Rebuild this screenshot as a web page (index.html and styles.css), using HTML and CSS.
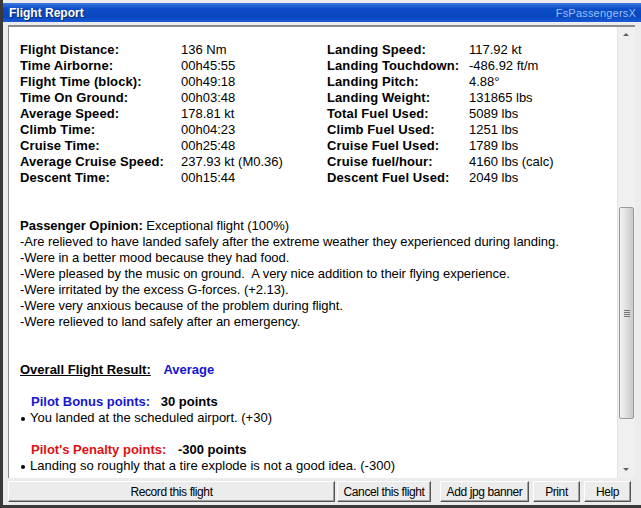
FILE: index.html
```html
<!DOCTYPE html>
<html lang="en">
<head>
    <meta charset="UTF-8">
    <title>Flight Report</title>
    <link rel="stylesheet" href="styles.css">
</head>
<body>
    <div class="window">
        <div class="titlebar">
            <span class="title">Flight Report</span>
            <span class="brand">FsPassengersX</span>
        </div>

        <div class="main">
            <div class="report">
                <div class="stats">
                    <div class="statgrid left">
                        <span class="lbl">Flight Distance:</span><span>136 Nm</span>
                        <span class="lbl">Time Airborne:</span><span>00h45:55</span>
                        <span class="lbl">Flight Time (block):</span><span>00h49:18</span>
                        <span class="lbl">Time On Ground:</span><span>00h03:48</span>
                        <span class="lbl">Average Speed:</span><span>178.81 kt</span>
                        <span class="lbl">Climb Time:</span><span>00h04:23</span>
                        <span class="lbl">Cruise Time:</span><span>00h25:48</span>
                        <span class="lbl">Average Cruise Speed:</span><span>237.93 kt (M0.36)</span>
                        <span class="lbl">Descent Time:</span><span>00h15:44</span>
                    </div>
                    <div class="statgrid right">
                        <span class="lbl">Landing Speed:</span><span>117.92 kt</span>
                        <span class="lbl">Landing Touchdown:</span><span>-486.92 ft/m</span>
                        <span class="lbl">Landing Pitch:</span><span>4.88°</span>
                        <span class="lbl">Landing Weight:</span><span>131865 lbs</span>
                        <span class="lbl">Total Fuel Used:</span><span>5089 lbs</span>
                        <span class="lbl">Climb Fuel Used:</span><span>1251 lbs</span>
                        <span class="lbl">Cruise Fuel Used:</span><span>1789 lbs</span>
                        <span class="lbl">Cruise fuel/hour:</span><span>4160 lbs (calc)</span>
                        <span class="lbl">Descent Fuel Used:</span><span>2049 lbs</span>
                    </div>
                </div>

                <div class="opinion">
                    <p><b>Passenger Opinion:</b> Exceptional flight (100%)</p>
                    <p>-Are relieved to have landed safely after the extreme weather they experienced during landing.</p>
                    <p>-Were in a better mood because they had food.</p>
                    <p>-Were pleased by the music on ground.&nbsp; A very nice addition to their flying experience.</p>
                    <p>-Were irritated by the excess G-forces. (+2.13).</p>
                    <p>-Were very anxious because of the problem during flight.</p>
                    <p>-Were relieved to land safely after an emergency.</p>
                </div>

                <div class="result">
                    <span class="result-lbl">Overall Flight Result:</span>
                    <span class="result-val">Average</span>
                </div>

                <div class="points">
                    <p class="points-head"><span class="bonus">Pilot Bonus points:</span> <span class="pts">30 points</span></p>
                    <p class="bullet">You landed at the scheduled airport. (+30)</p>
                </div>

                <div class="points">
                    <p class="points-head"><span class="penalty">Pilot's Penalty points:</span> <span class="pts">-300 points</span></p>
                    <p class="bullet">Landing so roughly that a tire explode is not a good idea. (-300)</p>
                </div>
            </div>

            <div class="scrollbar">
                <div class="arrow up"></div>
                <div class="track">
                    <div class="thumb"><span class="grip"></span></div>
                </div>
                <div class="arrow down"></div>
            </div>
        </div>

        <div class="buttons">
            <button class="btn record">Record this flight</button>
            <button class="btn cancel">Cancel this flight</button>
            <button class="btn banner">Add jpg banner</button>
            <button class="btn print">Print</button>
            <button class="btn help">Help</button>
        </div>
    </div>
</body>
</html>
```

FILE: styles.css
```css
body {
    margin: 0;
    padding: 0;
    background: #f0f0f0;
    font-family: "Liberation Sans", Arial, sans-serif;
    color: #000;
}

.window {
    width: 641px;
    height: 508px;
    box-sizing: border-box;
    padding-top: 3px;
    border-left: 3px solid #3a3a3a;
    border-bottom: 3px solid #3a3a3a;
    background: #ececec;
    display: flex;
    flex-direction: column;
}

.titlebar {
    height: 19px;
    display: flex;
    justify-content: space-between;
    align-items: center;
    padding: 0 5px 0 6px;
    background: linear-gradient(#3b78e0 0%, #0c4dc8 30%, #0846bd 70%, #1c5ad6 100%);
}

.title {
    color: #fff;
    font-weight: bold;
    font-size: 12px;
    text-shadow: 1px 1px 0 #0a2a6a;
}

.brand {
    color: #9cc0ff;
    font-size: 11px;
    letter-spacing: 0.2px;
}

.main {
    display: flex;
    margin: 3px 6px 0 5px;
    height: 451px;
    border-top: 2px solid #8c8c8c;
    border-left: 1px solid #8c8c8c;
    background: #fff;
}

.report {
    flex: 1;
    overflow: hidden;
    padding: 15px 0 0 11px;
    font-size: 13px;
    line-height: 16px;
}

.stats {
    display: flex;
}

.statgrid {
    display: grid;
    grid-template-columns: 161px auto;
}

.statgrid.left {
    width: 307px;
}

.statgrid.right {
    grid-template-columns: 142px auto;
}

.lbl {
    font-weight: bold;
    letter-spacing: 0.1px;
}

.opinion {
    margin-top: 32px;
    font-size: 13px;
    letter-spacing: -0.05px;
}

.opinion p,
.points p {
    margin: 0;
}

.opinion b {
    letter-spacing: 0;
}

.result {
    margin-top: 32px;
    font-weight: bold;
}

.result-lbl {
    text-decoration: underline;
}

.result-val {
    color: #1515d0;
    margin-left: 9px;
}

.points {
    margin-top: 16px;
}

.points-head {
    font-weight: bold;
    padding-left: 11px;
}

.bonus {
    color: #1515d0;
    margin-right: 7px;
}

.penalty {
    color: #e01010;
    margin-right: 8px;
}

.bullet {
    font-size: 13px;
    padding-left: 10px;
    position: relative;
}

.bullet::before {
    content: "";
    position: absolute;
    left: 1px;
    top: 7px;
    width: 4px;
    height: 4px;
    border-radius: 50%;
    background: #000;
}

.scrollbar {
    width: 17px;
    margin-left: 1px;
    display: flex;
    flex-direction: column;
    background: #f0f0f0;
    border-left: 1px solid #e4e4e4;
}

.arrow {
    height: 17px;
    position: relative;
}

.arrow::after {
    content: "";
    position: absolute;
    left: 5px;
    width: 0;
    height: 0;
    border-left: 3px solid transparent;
    border-right: 3px solid transparent;
}

.arrow.up::after {
    top: 6px;
    border-bottom: 3px solid #606060;
}

.arrow.down::after {
    top: 7px;
    border-top: 3px solid #606060;
}

.track {
    flex: 1;
    padding-top: 163px;
}

.thumb {
    height: 212px;
    margin: 0 1px 0 1px;
    box-sizing: border-box;
    border: 1px solid #9a9a9a;
    border-radius: 2px;
    background: linear-gradient(to right, #f4f4f4, #dadada 60%, #c8c8c8);
    display: flex;
    align-items: center;
    justify-content: center;
}

.grip {
    width: 6px;
    height: 7px;
    background: repeating-linear-gradient(#777 0, #777 1px, transparent 1px, transparent 2px);
}

.buttons {
    display: flex;
    margin: 3px 6px 0 5px;
    height: 21px;
}

.btn {
    font-family: "Liberation Sans", Arial, sans-serif;
    font-size: 12px;
    letter-spacing: -0.4px;
    height: 21px;
    padding: 0;
    background: #ececec;
    border: 1px solid #fff;
    border-right-color: #555;
    border-bottom-color: #555;
    box-shadow: inset -1px -1px 0 #a0a0a0;
    color: #000;
}

.record {
    width: 327px;
}

.cancel {
    width: 94px;
    margin-left: 2px;
}

.banner {
    width: 89px;
    margin-left: 9px;
}

.print {
    width: 47px;
    margin-left: 4px;
}

.help {
    width: 47px;
    margin-left: 4px;
}
```
